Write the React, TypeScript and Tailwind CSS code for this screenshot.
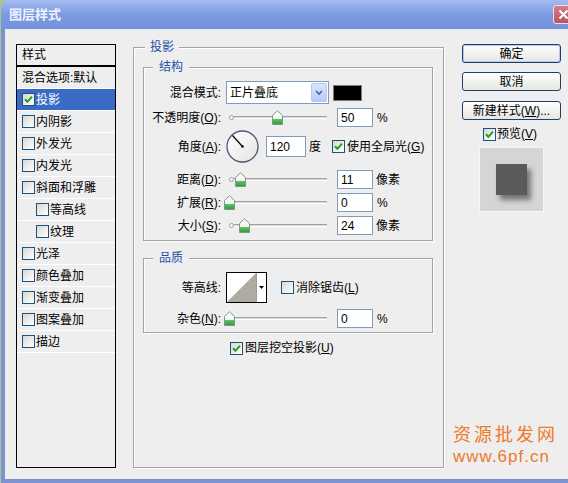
import React from "react";

// Photoshop 图层样式 dialog, XP silver-blue look

function Check({ checked = false }: { checked?: boolean }) {
  return (
    <span className="flex h-[13px] w-[13px] shrink-0 items-center justify-center border border-[#1c5180] bg-linear-to-br from-[#d8d8d2] to-white">
      {checked && (
        <svg width="9" height="9" viewBox="0 0 9 9">
          <path d="M1 4.2 L3.4 6.8 L8 1.6" fill="none" stroke="#21a121" strokeWidth="2" />
        </svg>
      )}
    </span>
  );
}

function Key({ text, k, colon = true }: { text: string; k: string; colon?: boolean }) {
  return (
    <>
      {text}(<u className="underline-offset-1">{k}</u>){colon ? ":" : ""}
    </>
  );
}

function Field({ v, wide = false }: { v: string; wide?: boolean }) {
  return (
    <div
      className={
        (wide ? "h-[21px] w-[40px]" : "h-[19px] w-[36px]") +
        " flex items-center border border-[#7f9db9] bg-white pl-[3px] leading-none"
      }
    >
      {v}
    </div>
  );
}

function Slider({ at }: { at: number }) {
  return (
    <div className="relative flex h-[19px] w-[104px] items-center pl-[3px]">
      <span className="h-[5px] w-[5px] shrink-0 rounded-full border border-[#9a9a9a] bg-white" />
      <span className="h-[3px] w-[93px] border-y border-t-[#a3a3a3] border-b-white bg-[#d6d6d6]" />
      <svg width="11" height="15" viewBox="0 0 11 15" className="absolute top-[2px]" style={{ left: at - 5 }}>
        <defs>
          <linearGradient id="thumb" x1="0" y1="0" x2="0" y2="1">
            <stop offset="0" stopColor="#ffffff" />
            <stop offset="0.6" stopColor="#eef6ee" />
            <stop offset="0.61" stopColor="#63c06a" />
            <stop offset="1" stopColor="#2f9a40" />
          </linearGradient>
        </defs>
        <path d="M0.5 5.5 L5.5 0.8 L10.5 5.5 V14.5 H0.5 Z" fill="url(#thumb)" stroke="#7b9a82" />
      </svg>
    </div>
  );
}

function Row({ label, className, children }: { label: React.ReactNode; className: string; children: React.ReactNode }) {
  return (
    <div className={"flex items-center " + className}>
      <span className="w-[77px] whitespace-nowrap text-right">{label}</span>
      <div className="ml-[5px] flex items-center">{children}</div>
    </div>
  );
}

function Legend({ text }: { text: string }) {
  return (
    <span className="absolute top-[-9px] left-[9px] bg-[#eeeeee] px-[6px] leading-[16px] text-[#1f51a6]">{text}</span>
  );
}

function Btn({ children, main = false }: { children: React.ReactNode; main?: boolean }) {
  return (
    <div
      className={
        "flex h-[19px] items-center justify-center rounded-[3px] border border-[#1d3f6e] bg-linear-to-b from-white to-[#e6e6e2] leading-none" +
        (main ? " shadow-[inset_0_0_0_1px_#b4cbf1]" : "")
      }
    >
      {children}
    </div>
  );
}

const items = [
  { name: "内阴影" },
  { name: "外发光" },
  { name: "内发光" },
  { name: "斜面和浮雕" },
  { name: "等高线", sub: true },
  { name: "纹理", sub: true },
  { name: "光泽" },
  { name: "颜色叠加" },
  { name: "渐变叠加" },
  { name: "图案叠加" },
  { name: "描边" },
];

export default function App() {
  return (
    <div className="relative h-[483px] w-[568px] overflow-hidden bg-[#a9c98a] pl-[1px] font-[family-name:'Liberation_Sans','Noto_Sans_CJK_SC',sans-serif] text-[12px] text-black">
      <div className="flex h-full flex-col">
        {/* title bar */}
        <div className="flex h-[29px] shrink-0 items-center justify-between rounded-tl-[7px] bg-linear-to-b from-[#a4bcf1] via-[#7d9ae0] to-[#7492dc] pl-[8px]">
          <span className="text-[13px] font-bold leading-none text-[#eef2ff]">图层样式</span>
          <div className="mr-[-6px] flex h-[19px] w-[21px] items-center justify-center rounded-[3px] border border-[#f2dfe3] bg-linear-to-b from-[#d47e88] to-[#b95462]">
            <svg width="11" height="11" viewBox="0 0 11 11">
              <path d="M1.5 1.5 L9.5 9.5 M9.5 1.5 L1.5 9.5" stroke="white" strokeWidth="2" />
            </svg>
          </div>
        </div>

        {/* body */}
        <div className="relative flex flex-1 border-b-[4px] border-l-[4px] border-[#7d92d2] bg-[#eeeeee]">
          {/* style list */}
          <div className="mt-[15px] ml-[11px] flex h-[424px] w-[100px] shrink-0 flex-col border border-black">
            <div className="flex h-[22px] shrink-0 items-center border-b-2 border-black pl-[5px]">样式</div>
            <div className="flex h-[22px] shrink-0 items-center border-b border-white pl-[5px] whitespace-nowrap">混合选项:默认</div>
            <div className="flex h-[22px] shrink-0 items-center gap-[1px] border-b border-white bg-[#3a6bc4] pl-[5px] text-white">
              <Check checked />
              投影
            </div>
            {items.map((it) => (
              <div
                key={it.name}
                className={
                  "flex h-[22px] shrink-0 items-center gap-[1px] border-b border-white " + (it.sub ? "pl-[19px]" : "pl-[5px]")
                }
              >
                <Check />
                {it.name}
              </div>
            ))}
          </div>

          {/* 投影 group */}
          <div className="relative mt-[18px] ml-[17px] flex h-[421px] w-[311px] shrink-0 flex-col border border-[#a3a3a3] pl-[9px] pt-[19px] shadow-[1px_1px_0_#ffffff,inset_1px_1px_0_#ffffff]">
            <span className="absolute top-[-9px] left-[11px] bg-[#eeeeee] px-[5px] leading-[16px] text-[#1f51a6]">投影</span>

            {/* 结构 */}
            <div className="relative flex w-[290px] flex-col border border-[#a3a3a3] pt-[13px] pb-[5px] shadow-[1px_1px_0_#ffffff,inset_1px_1px_0_#ffffff]">
              <Legend text="结构" />
              <Row label="混合模式:" className="h-[23px]">
                <div className="flex h-[23px] w-[103px] items-center justify-between border border-[#7f9db9] bg-white pl-[3px] pr-[1px]">
                  <span>正片叠底</span>
                  <span className="flex h-[19px] w-[16px] items-center justify-center rounded-[2px] border border-[#b5c8f2] bg-linear-to-b from-[#dbe6fd] to-[#b6cbf6]">
                    <svg width="8" height="6" viewBox="0 0 8 6">
                      <path d="M1 1 L4 4 L7 1" fill="none" stroke="#4d6185" strokeWidth="1.6" />
                    </svg>
                  </span>
                </div>
                <div className="ml-[4px] h-[16px] w-[29px] border border-[#7a7a7a] bg-black" />
              </Row>
              <Row label={<Key text="不透明度" k="O" />} className="mt-[4px] h-[19px]">
                <Slider at={51} />
                <div className="ml-[7px]">
                  <Field v="50" />
                </div>
                <span className="ml-[4px]">%</span>
              </Row>
              <Row label={<Key text="角度" k="A" />} className="mt-[3px] h-[33px]">
                <svg width="33" height="33" viewBox="0 0 33 33">
                  <defs>
                    <linearGradient id="dial" x1="0" y1="0" x2="1" y2="1">
                      <stop offset="0" stopColor="#ffffff" />
                      <stop offset="1" stopColor="#e4e4e4" />
                    </linearGradient>
                  </defs>
                  <circle cx="16.5" cy="16.5" r="15.5" fill="url(#dial)" stroke="#4a5778" strokeWidth="1.3" />
                  <path d="M16.5 16.5 L6.5 5.5" stroke="#000000" strokeWidth="1.2" />
                  <circle cx="16.5" cy="16.5" r="1.3" fill="#000000" />
                </svg>
                <div className="ml-[7px]">
                  <Field v="120" wide />
                </div>
                <span className="ml-[3px]">度</span>
                <span className="ml-[11px]">
                  <Check checked />
                </span>
                <span className="ml-[2px] whitespace-nowrap">
                  <Key text="使用全局光" k="G" colon={false} />
                </span>
              </Row>
              <Row label={<Key text="距离" k="D" />} className="mt-[7px] h-[19px]">
                <Slider at={14} />
                <div className="ml-[7px]">
                  <Field v="11" />
                </div>
                <span className="ml-[3px]">像素</span>
              </Row>
              <Row label={<Key text="扩展" k="R" />} className="mt-[4px] h-[19px]">
                <Slider at={3} />
                <div className="ml-[7px]">
                  <Field v="0" />
                </div>
                <span className="ml-[4px]">%</span>
              </Row>
              <Row label={<Key text="大小" k="S" />} className="mt-[4px] h-[19px]">
                <Slider at={18} />
                <div className="ml-[7px]">
                  <Field v="24" />
                </div>
                <span className="ml-[3px]">像素</span>
              </Row>
            </div>

            {/* 品质 */}
            <div className="relative mt-[17px] flex w-[290px] flex-col border border-[#a3a3a3] pt-[13px] pb-[4px] shadow-[1px_1px_0_#ffffff,inset_1px_1px_0_#ffffff]">
              <Legend text="品质" />
              <Row label="等高线:" className="h-[31px]">
                <div className="flex h-[31px] w-[41px] border border-black bg-white">
                  <svg width="29" height="29" viewBox="0 0 29 29" className="shrink-0">
                    <polygon points="0,29 29,0 29,29" fill="#b0aba2" />
                  </svg>
                  <div className="flex flex-1 items-center justify-center border-l border-[#9c9c9c]">
                    <svg width="5" height="3" viewBox="0 0 5 3">
                      <polygon points="0,0 5,0 2.5,3" fill="#000000" />
                    </svg>
                  </div>
                </div>
                <span className="ml-[14px]">
                  <Check />
                </span>
                <span className="ml-[2px] whitespace-nowrap">
                  <Key text="消除锯齿" k="L" colon={false} />
                </span>
              </Row>
              <Row label={<Key text="杂色" k="N" />} className="mt-[6px] h-[19px]">
                <Slider at={3} />
                <div className="ml-[7px]">
                  <Field v="0" />
                </div>
                <span className="ml-[4px]">%</span>
              </Row>
            </div>

            <div className="mt-[8px] flex h-[14px] items-center gap-[2px] pl-[87px]">
              <Check checked />
              <span className="whitespace-nowrap">
                <Key text="图层挖空投影" k="U" colon={false} />
              </span>
            </div>
          </div>

          {/* right column */}
          <div className="mt-[15px] ml-[18px] flex w-[99px] shrink-0 flex-col">
            <Btn main>确定</Btn>
            <div className="mt-[9px]">
              <Btn>取消</Btn>
            </div>
            <div className="mt-[10px]">
              <Btn>
                新建样式(<u>W</u>)...
              </Btn>
            </div>
            <div className="mt-[7px] flex h-[14px] items-center gap-[1px] pl-[21px]">
              <Check checked />
              <span className="whitespace-nowrap">
                预览(<u>V</u>)
              </span>
            </div>
            <div className="mt-[6px] ml-[17px] flex h-[65px] w-[65px] items-center justify-center border border-[#f6f6f6] bg-[#d5d5d5]">
              <div className="h-[31px] w-[31px] bg-[#5a5a5a] shadow-[4px_5px_5px_rgba(0,0,0,0.45)]" />
            </div>
          </div>

          {/* watermark */}
          <div className="absolute top-[397px] left-[448px] flex flex-col leading-none text-[#ee7a2b]">
            <span className="text-[18px] tracking-[3px]">资源批发网</span>
            <span className="mt-[4px] text-[17px] tracking-[1px]">www.6pf.cn</span>
          </div>
        </div>
      </div>
    </div>
  );
}
